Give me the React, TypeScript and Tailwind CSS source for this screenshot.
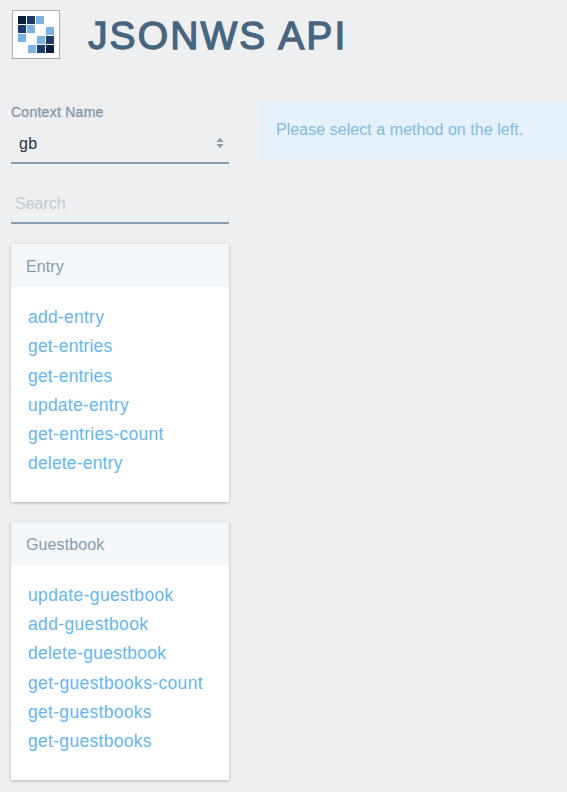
import React from "react";

type Method = { name: string; tracking: string };

const entryMethods: Method[] = [
  { name: "add-entry", tracking: "tracking-[0.25px]" },
  { name: "get-entries", tracking: "tracking-[0.15px]" },
  { name: "get-entries", tracking: "tracking-[0.15px]" },
  { name: "update-entry", tracking: "tracking-[0.22px]" },
  { name: "get-entries-count", tracking: "tracking-[0.25px]" },
  { name: "delete-entry", tracking: "tracking-[0.18px]" },
];

const guestbookMethods: Method[] = [
  { name: "update-guestbook", tracking: "tracking-[0.35px]" },
  { name: "add-guestbook", tracking: "tracking-[0.35px]" },
  { name: "delete-guestbook", tracking: "tracking-[0.25px]" },
  { name: "get-guestbooks-count", tracking: "tracking-[0.33px]" },
  { name: "get-guestbooks", tracking: "tracking-[0.3px]" },
  { name: "get-guestbooks", tracking: "tracking-[0.3px]" },
];

function Logo() {
  return (
    <svg width="48" height="49" viewBox="0 0 48 49" className="shrink-0" shapeRendering="crispEdges">
      <rect x="0" y="0" width="48" height="49" rx="1" fill="#a9abad" />
      <rect x="1" y="1" width="46" height="47" fill="#fff" />
      <g fill="#06203c">
        <rect x="6" y="6" width="8" height="8" />
        <rect x="34" y="35" width="8" height="8" />
      </g>
      <g fill="#1c3a6e">
        <rect x="15" y="6" width="8" height="8" />
        <rect x="6" y="15" width="8" height="8" />
        <rect x="34" y="26" width="8" height="8" />
        <rect x="25" y="35" width="8" height="8" />
      </g>
      <g fill="#79b2e3">
        <rect x="24" y="6" width="8" height="8" />
        <rect x="15" y="15" width="8" height="8" />
        <rect x="6" y="24" width="8" height="8" />
        <rect x="34" y="17" width="8" height="8" />
        <rect x="25" y="26" width="8" height="8" />
        <rect x="16" y="35" width="8" height="8" />
      </g>
    </svg>
  );
}

function Panel({ title, methods, listClass }: { title: string; methods: Method[]; listClass: string }) {
  return (
    <section className="h-[258px] bg-white shadow-[0_1px_3px_rgba(0,0,0,0.25)]">
      <h2 className="h-[43px] bg-[#f3f7fa] pl-[15px] text-[16px] leading-[45px] tracking-[0.1px] text-[#869cad]">{title}</h2>
      <ul className={listClass}>
        {methods.map((m, i) => (
          <li key={i} className="h-[29.2px] text-[17.5px] leading-[29.2px] text-[#65b6f0]">
            <a className={m.tracking}>{m.name}</a>
          </li>
        ))}
      </ul>
    </section>
  );
}

export default function App() {
  return (
    <div className="h-[792px] w-[567px] overflow-hidden bg-[#eeeff1] font-['Liberation_Sans',Arial,sans-serif]">
      <header className="flex h-[100px] items-start pt-[10px] pl-3">
        <Logo />
        <h1 className="ml-[28px] pt-[3px] text-[39px] leading-[46px] tracking-[2.1px] text-[#48657f] [-webkit-text-stroke:1.3px_#48657f]">
          JSONWS API
        </h1>
      </header>
      <main className="flex items-start">
        <aside className="ml-[11px] w-[218px] shrink-0">
          <label className="block h-[25px] pt-[4px] text-[14px] leading-[17px] tracking-[0.26px] text-[#869cad] [-webkit-text-stroke:0.4px_#869cad]">
            Context Name
          </label>
          <div className="flex h-[39px] items-center justify-between border-b-2 border-[#869cb0] pr-[5px] pl-2 text-[16px] tracking-[0.3px] text-[#27353f]">
            <span>gb</span>
            <svg width="8" height="12" viewBox="0 0 8 12" fill="#869cad" className="mb-px">
              <path d="M4 0.8 7.6 5H.4ZM.4 7h7.2L4 11.2Z" />
            </svg>
          </div>
          <div className="mb-5 h-[60px] border-b-2 border-[#869cb0] pt-[30px] pl-1 text-[16px] leading-[20px] text-[#bfcbd5]">
            Search
          </div>
          <div className="flex flex-col gap-5">
            <Panel title="Entry" methods={entryMethods} listClass="pt-[16.2px] pl-[17px]" />
            <Panel title="Guestbook" methods={guestbookMethods} listClass="pt-4 pl-[17px]" />
          </div>
        </aside>
        <div className="ml-[31px] h-[59px] flex-1 bg-[#e5f0f9] pl-4 text-[16px] leading-[60px] tracking-[0.05px] text-[#83bbdc]">
          Please select a method on the left.
        </div>
      </main>
    </div>
  );
}
